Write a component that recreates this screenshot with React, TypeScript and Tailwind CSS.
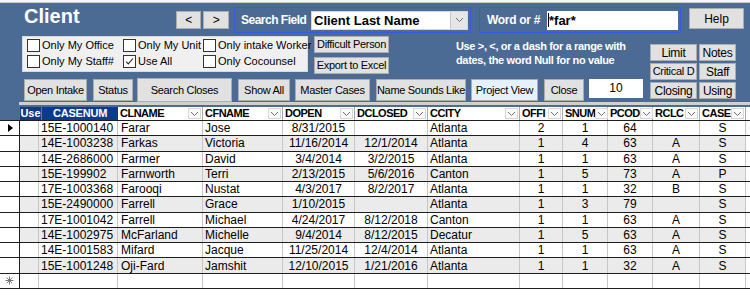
import React from "react";

const Chev = ({ c = "#707070" }: { c?: string }) => (
  <svg width="9" height="6" viewBox="0 0 9 6">
    <path d="M1 1l3.5 3.5L8 1" fill="none" stroke={c} strokeWidth="1" />
  </svg>
);

function Btn({ className = "", children }: { className?: string; children: React.ReactNode }) {
  return (
    <div
      className={`flex items-center justify-center border border-[#adadad] bg-[#e1e1e1] text-[11px] tracking-[-0.3px] text-black whitespace-nowrap shrink-0 ${className}`}
    >
      {children}
    </div>
  );
}

function Cb({ label, checked = false, className = "" }: { label: string; checked?: boolean; className?: string }) {
  return (
    <div className={`flex items-center gap-[2px] shrink-0 ${className}`}>
      <div className="w-[13px] h-[13px] border border-[#333] bg-white flex items-center justify-center">
        {checked && (
          <svg width="9" height="9" viewBox="0 0 9 9">
            <path d="M1 4.5l2.2 2.4L8 1.5" fill="none" stroke="#222" strokeWidth="1.1" />
          </svg>
        )}
      </div>
      <span className="text-[11px] leading-[13px] text-black whitespace-nowrap">{label}</span>
    </div>
  );
}

const rows: string[][] = [
  ["15E-1000140", "Farar", "Jose", "8/31/2015", "", "Atlanta", "2", "1", "64", "", "S"],
  ["14E-1003238", "Farkas", "Victoria", "11/16/2014", "12/1/2014", "Atlanta", "1", "4", "63", "A", "S"],
  ["14E-2686000", "Farmer", "David", "3/4/2014", "3/2/2015", "Atlanta", "1", "1", "63", "A", "S"],
  ["15E-199902", "Farnworth", "Terri", "2/13/2015", "5/6/2016", "Canton", "1", "5", "73", "A", "P"],
  ["17E-1003368", "Farooqi", "Nustat", "4/3/2017", "8/2/2017", "Atlanta", "1", "1", "32", "B", "S"],
  ["15E-2490000", "Farrell", "Grace", "1/10/2015", "", "Atlanta", "1", "3", "79", "", "S"],
  ["17E-1001042", "Farrell", "Michael", "4/24/2017", "8/12/2018", "Canton", "1", "1", "63", "A", "S"],
  ["14E-1002975", "McFarland", "Michelle", "9/4/2014", "8/12/2015", "Decatur", "1", "5", "63", "A", "S"],
  ["14E-1001583", "Mifard", "Jacque", "11/25/2014", "12/4/2014", "Atlanta", "1", "1", "63", "A", "S"],
  ["15E-1001248", "Oji-Fard", "Jamshit", "12/10/2015", "1/21/2016", "Atlanta", "1", "1", "32", "A", "S"],
];

const cols = [
  "w-[79px] pl-[2px]",
  "w-[85px] pl-[3px]",
  "w-[80px] pl-[2px]",
  "w-[72px] justify-center",
  "w-[73px] justify-center",
  "w-[92px] pl-[2px]",
  "w-[43px] justify-center",
  "w-[45px] justify-center",
  "w-[45px] justify-center",
  "w-[47px] justify-center",
  "w-[46px] justify-center",
];

const hdrs = [
  { t: "CLNAME", w: "w-[85px]" },
  { t: "CFNAME", w: "w-[80px]" },
  { t: "DOPEN", w: "w-[72px]" },
  { t: "DCLOSED", w: "w-[73px]" },
  { t: "CCITY", w: "w-[92px]" },
  { t: "OFFI", w: "w-[43px]" },
  { t: "SNUM", w: "w-[45px]" },
  { t: "PCOD", w: "w-[45px]" },
  { t: "RCLC", w: "w-[47px]" },
  { t: "CASE", w: "w-[46px]" },
];

export default function App() {
  return (
    <div className="w-[750px] h-[295px] overflow-hidden bg-white font-['Liberation_Sans',Arial,sans-serif] text-black">
      {/* top strip */}
      <div className="h-[3px] bg-[#f6f6f6] border-b border-[#c9c9c9]" />

      {/* blue form header */}
      <div className="h-[117px] bg-[#4b6b95] flex flex-col">
        {/* band 1 */}
        <div className="h-[31px] flex items-start shrink-0">
          <div className="w-[152px] ml-[24px] shrink-0 text-white font-bold text-[20px] leading-[24px] mt-[1px]">
            Client
          </div>
          <div className="flex gap-[2px] mt-[8px]">
            <Btn className="w-[25px] h-[18px] text-[12px]">&lt;</Btn>
            <Btn className="w-[26px] h-[18px] text-[12px]">&gt;</Btn>
          </div>
          <div className="ml-[5px] mt-[4px] w-[237px] h-[26px] border border-[#2f5fe0] flex items-center justify-between pl-[6px] pr-[2px] shrink-0">
            <span className="text-white font-bold text-[12px] tracking-[-0.5px] whitespace-nowrap">Search Field</span>
            <div className="w-[157px] h-[19px] bg-white flex items-center border border-[#d8d8d8]">
              <span className="flex-1 pl-[2px] font-bold text-[13px] leading-[17px] whitespace-nowrap">Client Last Name</span>
              <div className="w-[17px] h-full bg-[#e6e6e6] border-l border-[#c8c8c8] flex items-center justify-center">
                <Chev />
              </div>
            </div>
          </div>
          <div className="ml-[8px] mt-[4px] w-[202px] h-[26px] border border-[#2f5fe0] flex items-center justify-between pl-[7px] pr-[2px] shrink-0">
            <span className="text-white font-bold text-[12px] tracking-[-0.3px] whitespace-nowrap">Word or #</span>
            <div className="w-[131px] h-[19px] bg-white flex items-center pl-[1px]">
              <div className="w-[1px] h-[14px] bg-black" />
              <span className="font-bold text-[13px] leading-[17px]">*far*</span>
            </div>
          </div>
          <Btn className="ml-[8px] mt-[5px] w-[55px] h-[21px] text-[12px] tracking-[0px]">Help</Btn>
        </div>

        {/* band 2 */}
        <div className="h-[68px] flex shrink-0">
          <div className="w-[643px] flex flex-col shrink-0">
            {/* sub row A */}
            <div className="h-[44px] flex items-start">
              <div className="ml-[22px] mt-[2px] w-[286px] h-[36px] bg-[#f0f0f0] border border-[#dadada] flex flex-col pl-[4px] pt-[1px] gap-[2px] shrink-0">
                <div className="flex h-[14px] items-center">
                  <Cb className="w-[96px]" label="Only My Office" />
                  <Cb className="w-[80px]" label="Only My Unit" />
                  <Cb label="Only intake Worker" />
                </div>
                <div className="flex h-[14px] items-center">
                  <Cb className="w-[96px]" label="Only My Staff#" />
                  <Cb className="w-[80px]" label="Use All" checked />
                  <Cb label="Only Cocounsel" />
                </div>
              </div>
              <div className="ml-[6px] flex flex-col shrink-0">
                <Btn className="mt-[2px] w-[75px] h-[17px]">Difficult Person</Btn>
                <Btn className="mt-[4px] w-[75px] h-[17px]">Export to Excel</Btn>
              </div>
              <div className="ml-[67px] mt-[5px] text-white font-bold text-[11px] leading-[14px] tracking-[-0.35px] whitespace-nowrap">
                <div>Use &gt;, &lt;, or a dash for a range with</div>
                <div>dates, the word Null for no value</div>
              </div>
            </div>
            {/* sub row B */}
            <div className="h-[24px] flex items-start pt-[1px] pl-[24px]">
              <Btn className="w-[63px] h-[22px]">Open Intake</Btn>
              <Btn className="ml-[6px] w-[40px] h-[22px]">Status</Btn>
              <Btn className="ml-[4px] -mt-[1px] w-[95px] h-[24px] bg-[#ccf7cc]">Search Closes</Btn>
              <Btn className="ml-[6px] w-[52px] h-[22px]">Show All</Btn>
              <Btn className="ml-[5px] w-[75px] h-[22px]">Master Cases</Btn>
              <Btn className="ml-[6px] w-[90px] h-[22px]">Name Sounds Like</Btn>
              <Btn className="ml-[5px] w-[67px] h-[22px] bg-[#e5f1fb] border-[#0078d7]">Project View</Btn>
              <Btn className="ml-[6px] w-[40px] h-[22px]">Close</Btn>
              <div className="ml-[5px] w-[54px] h-[19px] bg-white flex items-center justify-center text-[12px] leading-[17px] shrink-0">
                10
              </div>
            </div>
          </div>
          <div className="ml-[7px] mt-[10px] grid grid-cols-[47px_37px] gap-x-[2px] gap-y-[2px] auto-rows-[17px] content-start">
            <Btn className="h-[17px] text-[12px]">Limit</Btn>
            <Btn className="h-[17px] text-[12px]">Notes</Btn>
            <Btn className="h-[17px]">Critical D</Btn>
            <Btn className="h-[17px] text-[12px]">Staff</Btn>
            <Btn className="h-[17px] text-[12px]">Closing</Btn>
            <Btn className="h-[17px] text-[12px]">Using</Btn>
          </div>
        </div>

        {/* separator */}
        <div className="h-[3px] ml-[19px] bg-[#d0d0d0] shrink-0" />

        {/* grid header */}
        <div className="h-[13px] mt-[2px] ml-[20px] flex shrink-0">
          <div className="w-[22px] shrink-0 bg-[#173a7e] border-r border-[#5d7bb0] text-white font-bold text-[11px] leading-[13px] flex items-center justify-center">
            Use
          </div>
          <div className="w-[76px] shrink-0 bg-[#0b3b8b] text-white font-bold text-[11px] leading-[13px] flex items-center justify-center tracking-[-0.2px]">
            CASENUM
          </div>
          {hdrs.map((h) => (
            <div key={h.t} className={`${h.w} shrink-0 bg-white border-r border-[#a9a9a9] flex items-center pl-[2px]`}>
              <span className="flex-1 whitespace-nowrap font-bold text-[11px] leading-[13px] tracking-[-0.5px]">
                {h.t}
              </span>
              <div className="w-[13px] h-[11px] mr-[1px] shrink-0 border border-[#d6d6d6] bg-[#fafafa] flex items-center justify-center">
                <Chev />
              </div>
            </div>
          ))}
          <div className="flex-1 bg-white" />
        </div>
      </div>

      {/* data grid */}
      <div className="flex flex-col border-t border-[#1e1e1e]">
        {rows.map((r, i) => (
          <div
            key={i}
            className={`flex h-[15.27px] border-b border-[#1e1e1e] text-[12px] leading-[14px] ${i % 2 === 1 ? "bg-[#ebebeb]" : "bg-white"}`}
          >
            <div className="w-[20px] shrink-0 h-full bg-white border-r border-[#1e1e1e] flex items-center justify-center">
              {i === 0 && (
                <div className="w-0 h-0 border-l-[5px] border-l-black border-y-[4px] border-y-transparent ml-[1px]" />
              )}
            </div>
            <div className="w-[19px] shrink-0 h-full border-r border-[#c6c6c6]" />
            {cols.map((c, j) => (
              <div key={j} className={`${c} shrink-0 h-full flex items-center border-r border-[#c6c6c6] overflow-hidden whitespace-nowrap`}>
                {r[j]}
              </div>
            ))}
            <div className="flex-1 bg-white" />
          </div>
        ))}
        <div className="flex h-[15.27px] border-b border-[#1e1e1e] bg-white">
          <div className="w-[20px] shrink-0 h-full border-r border-[#1e1e1e] flex items-center justify-center">
            <svg width="9" height="9" viewBox="0 0 9 9">
              <path d="M4.5 0.5v8M0.5 4.5h8M1.7 1.7l5.6 5.6M7.3 1.7l-5.6 5.6" stroke="#777" strokeWidth="1" />
            </svg>
          </div>
          <div className="w-[19px] shrink-0 h-full border-r border-[#c6c6c6]" />
          {cols.map((c, j) => (
            <div key={j} className={`${c} shrink-0 h-full border-r border-[#c6c6c6]`} />
          ))}
          <div className="flex-1" />
        </div>
      </div>
    </div>
  );
}
